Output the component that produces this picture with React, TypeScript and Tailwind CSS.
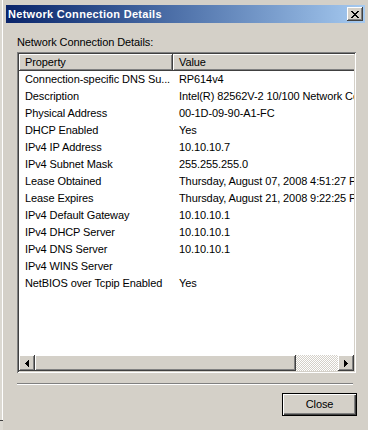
import React from "react";

const rows: [string, string][] = [
  ["Connection-specific DNS Su...", "RP614v4"],
  ["Description", "Intel(R) 82562V-2 10/100 Network Connection"],
  ["Physical Address", "00-1D-09-90-A1-FC"],
  ["DHCP Enabled", "Yes"],
  ["IPv4 IP Address", "10.10.10.7"],
  ["IPv4 Subnet Mask", "255.255.255.0"],
  ["Lease Obtained", "Thursday, August 07, 2008 4:51:27 PM"],
  ["Lease Expires", "Thursday, August 21, 2008 9:22:25 PM"],
  ["IPv4 Default Gateway", "10.10.10.1"],
  ["IPv4 DHCP Server", "10.10.10.1"],
  ["IPv4 DNS Server", "10.10.10.1"],
  ["IPv4 WINS Server", ""],
  ["NetBIOS over Tcpip Enabled", "Yes"],
];

const raised =
  "bg-[#d4d0c8] shadow-[inset_-1px_-1px_#404040,inset_1px_1px_#ffffff,inset_-2px_-2px_#808080,inset_2px_2px_#d4d0c8]";

function CloseGlyph() {
  const px: [number, number, number][] = [
    [0, 0, 2], [6, 0, 2],
    [1, 1, 2], [5, 1, 2],
    [2, 2, 4],
    [3, 3, 2],
    [2, 4, 4],
    [1, 5, 2], [5, 5, 2],
    [0, 6, 2], [6, 6, 2],
  ];
  return (
    <svg width="8" height="7" viewBox="0 0 8 7" shapeRendering="crispEdges">
      {px.map(([x, y, w], i) => (
        <rect key={i} x={x} y={y} width={w} height={1} fill="#000" />
      ))}
    </svg>
  );
}

function Arrow({ dir }: { dir: "left" | "right" }) {
  return (
    <svg width="4" height="7" viewBox="0 0 4 7" shapeRendering="crispEdges">
      {dir === "left" ? (
        <>
          <rect x="3" y="0" width="1" height="7" fill="#000" />
          <rect x="2" y="1" width="1" height="5" fill="#000" />
          <rect x="1" y="2" width="1" height="3" fill="#000" />
          <rect x="0" y="3" width="1" height="1" fill="#000" />
        </>
      ) : (
        <>
          <rect x="0" y="0" width="1" height="7" fill="#000" />
          <rect x="1" y="1" width="1" height="5" fill="#000" />
          <rect x="2" y="2" width="1" height="3" fill="#000" />
          <rect x="3" y="3" width="1" height="1" fill="#000" />
        </>
      )}
    </svg>
  );
}

export default function App() {
  return (
    <div className="w-[368px] h-[430px] bg-[#d4d0c8] flex overflow-hidden font-['Liberation_Sans',Arial,sans-serif] text-[11px] tracking-[-0.1px] text-black">
      <div className="w-[3px] flex flex-col">
        <div className="h-[420px] border-r border-white bg-[#dcd9d2]" />
        <div className="h-px bg-[#404040]" />
        <div className="flex-1 bg-[#dcd9d2]" />
      </div>
      <div className="flex-1 flex flex-col pt-[5px]">
        <div className="ml-[3px] mr-[3px] h-[18px] flex items-center bg-linear-to-r from-[#0a246a] to-[#a6caf0]">
          <span className="pl-[2px] font-bold text-white leading-[18px] tracking-[0.3px] whitespace-nowrap">
            Network Connection Details
          </span>
          <div className={`ml-auto mr-[2px] w-[16px] h-[14px] flex items-center justify-center ${raised}`}>
            <CloseGlyph />
          </div>
        </div>

        <div className="mt-[13px] ml-[14px] h-[13px] leading-[13px] whitespace-nowrap">
          Network Connection Details:
        </div>

        <div className="mt-[3px] ml-[14px] w-[339px] h-[321px] p-[2px] bg-white shadow-[inset_1px_1px_#808080,inset_-1px_-1px_#ffffff,inset_2px_2px_#404040,inset_-2px_-2px_#d4d0c8] flex flex-col">
          <div className="flex-1 flex flex-col overflow-hidden">
            <div className="h-[17px] flex shrink-0">
              <div className={`w-[154px] shrink-0 pl-[6px] leading-[17px] ${raised}`}>Property</div>
              <div className={`w-[400px] shrink-0 pl-[6px] leading-[17px] ${raised}`}>Value</div>
            </div>
            {rows.map(([k, v]) => (
              <div key={k} className="h-[17px] flex shrink-0 leading-[17px] whitespace-nowrap">
                <div className="w-[154px] shrink-0 pl-[6px] overflow-hidden">{k}</div>
                <div className="shrink-0 pl-[6px]">{v}</div>
              </div>
            ))}
          </div>
          <div className="h-[16px] flex shrink-0">
            <div className={`w-[16px] h-[16px] flex items-center justify-center ${raised}`}>
              <Arrow dir="left" />
            </div>
            <div className={`w-[261px] h-[16px] ${raised}`} />
            <div className="flex-1 h-[16px] bg-[repeating-conic-gradient(#ffffff_0_25%,#d4d0c8_0_50%)] bg-[length:2px_2px]" />
            <div className={`w-[16px] h-[16px] flex items-center justify-center ${raised}`}>
              <Arrow dir="right" />
            </div>
          </div>
        </div>

        <div className="mt-[10px] ml-[14px] w-[336px] h-[2px] border-t border-[#808080] border-b border-b-white" />

        <div className="mt-[8px] self-end mr-[11px] w-[75px] h-[23px] border border-black bg-[#d4d0c8] shadow-[inset_1px_1px_#ffffff,inset_-1px_-1px_#404040,inset_-2px_-2px_#808080] flex items-center justify-center">
          Close
        </div>
      </div>
    </div>
  );
}
